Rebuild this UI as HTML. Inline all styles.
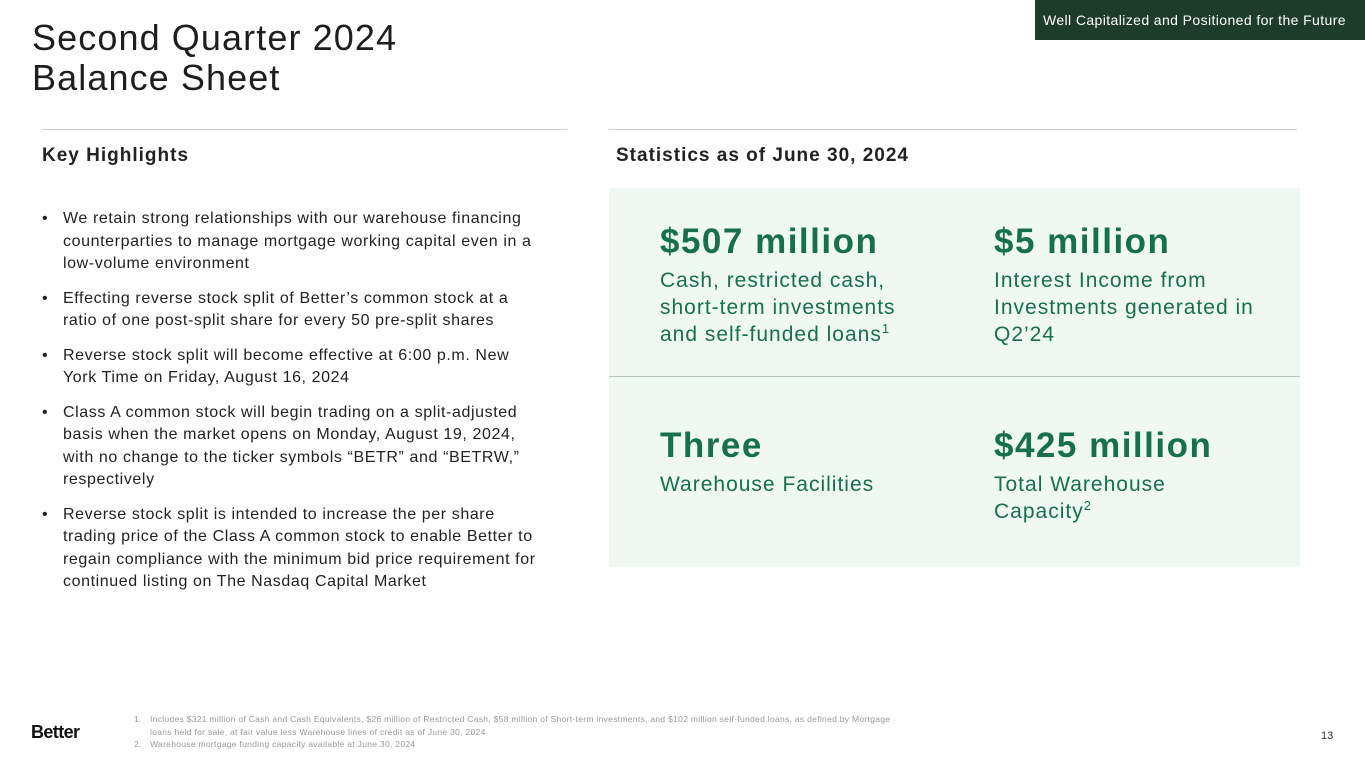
<!DOCTYPE html>
<html><head><meta charset="utf-8"><style>
*{margin:0;padding:0;box-sizing:border-box}
body{width:1365px;height:768px;background:#fff;position:relative;overflow:hidden;font-family:"Liberation Sans","DejaVu Sans",sans-serif;color:#292b29}
.a{position:absolute}
.tag{right:0;top:0;width:330px;height:40px;background:#1f3b2b;color:#fff;font-size:14px;line-height:40px;padding-left:8px;letter-spacing:0.4px;white-space:nowrap}
h1{position:absolute;left:32px;top:18px;font-weight:400;font-size:36px;line-height:40px;color:#1d1f1d;letter-spacing:1.1px}
.rule{height:1px;background:#ccc}
h2{position:absolute;font-size:19px;font-weight:700;color:#222;letter-spacing:1px}
ul{position:absolute;left:42px;top:208px;width:500px;list-style:none;font-size:16px;line-height:22.5px;color:#222;letter-spacing:0.6px}
li{position:relative;padding-left:21px;margin-bottom:12px}
li:before{content:"•";position:absolute;left:0}
.box{left:609px;top:188px;width:691px;height:379px;background:#eff8f3}
.big{position:absolute;font-size:35px;font-weight:700;color:#17704d;letter-spacing:1.5px}
.sub{position:absolute;font-size:21px;line-height:27px;color:#17704d;letter-spacing:1px;white-space:nowrap}
sup{font-size:13px;vertical-align:8px;line-height:0}
.fn{left:134px;top:713px;font-size:8.5px;line-height:12.5px;color:#999;width:770px;letter-spacing:0.3px}
</style></head><body>
<div class="a tag">Well Capitalized and Positioned for the Future</div>
<h1>Second Quarter 2024<br>Balance Sheet</h1>
<div class="a rule" style="left:42px;top:129px;width:525px"></div>
<div class="a rule" style="left:609px;top:129px;width:688px"></div>
<h2 style="left:42px;top:145px">Key Highlights</h2>
<h2 style="left:616px;top:145px">Statistics as of June 30, 2024</h2>
<ul>
<li>We retain strong relationships with our warehouse financing counterparties to manage mortgage working capital even in a low-volume environment</li>
<li>Effecting reverse stock split of Better’s common stock at a ratio of one post-split share for every 50 pre-split shares</li>
<li>Reverse stock split will become effective at 6:00 p.m. New York Time on Friday, August 16, 2024</li>
<li>Class A common stock will begin trading on a split-adjusted basis when the market opens on Monday, August 19, 2024, with no change to the ticker symbols “BETR” and “BETRW,” respectively</li>
<li>Reverse stock split is intended to increase the per share trading price of the Class A common stock to enable Better to regain compliance with the minimum bid price requirement for continued listing on The Nasdaq Capital Market</li>
</ul>
<div class="a box"></div>
<div class="a rule" style="left:609px;top:376px;width:691px;background:#b9c9bf"></div>
<div class="big" style="left:660px;top:222px">$507 million</div>
<div class="sub" style="left:660px;top:267px">Cash, restricted cash,<br>short-term investments<br>and self-funded loans<sup>1</sup></div>
<div class="big" style="left:994px;top:222px">$5 million</div>
<div class="sub" style="left:994px;top:267px">Interest Income from<br>Investments generated in<br>Q2’24</div>
<div class="big" style="left:660px;top:426px">Three</div>
<div class="sub" style="left:660px;top:471px">Warehouse Facilities</div>
<div class="big" style="left:994px;top:426px">$425 million</div>
<div class="sub" style="left:994px;top:471px">Total Warehouse<br>Capacity<sup>2</sup></div>
<div class="a" style="left:31px;top:722px;font-size:18px;font-weight:700;color:#111;letter-spacing:-0.6px">Better</div>
<div class="a fn">
<div style="padding-left:16px;position:relative"><span style="position:absolute;left:0">1.</span>Includes $321 million of Cash and Cash Equivalents, $26 million of Restricted Cash, $58 million of Short-term investments, and $102 million self-funded loans, as defined by Mortgage<br>loans held for sale, at fair value less Warehouse lines of credit as of June 30, 2024</div>
<div style="padding-left:16px;position:relative"><span style="position:absolute;left:0">2.</span>Warehouse mortgage funding capacity available at June 30, 2024</div>
</div>
<div class="a" style="left:1321px;top:730px;font-size:11px;color:#333">13</div>
</body></html>
